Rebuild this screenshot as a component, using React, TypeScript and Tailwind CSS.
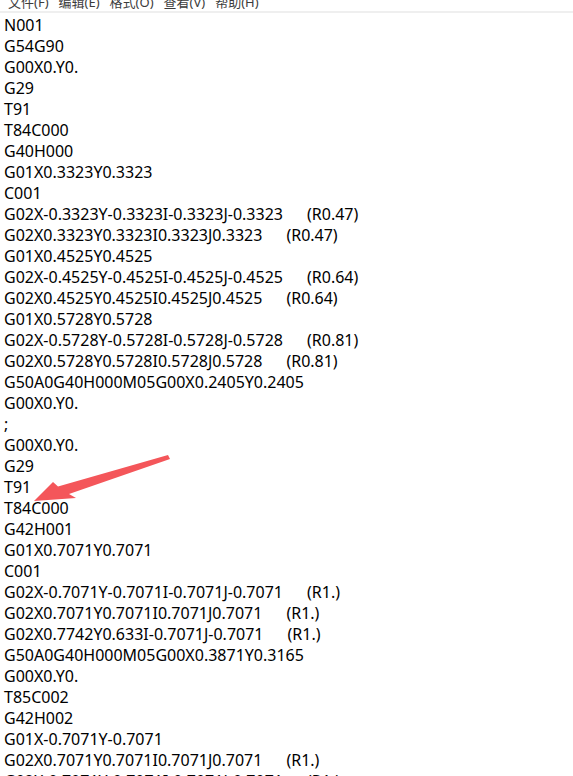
const lines: [string, string?][] = [
  ["N001"],
  ["G54G90"],
  ["G00X0.Y0."],
  ["G29"],
  ["T91"],
  ["T84C000"],
  ["G40H000"],
  ["G01X0.3323Y0.3323"],
  ["C001"],
  ["G02X-0.3323Y-0.3323I-0.3323J-0.3323", "(R0.47)"],
  ["G02X0.3323Y0.3323I0.3323J0.3323", "(R0.47)"],
  ["G01X0.4525Y0.4525"],
  ["G02X-0.4525Y-0.4525I-0.4525J-0.4525", "(R0.64)"],
  ["G02X0.4525Y0.4525I0.4525J0.4525", "(R0.64)"],
  ["G01X0.5728Y0.5728"],
  ["G02X-0.5728Y-0.5728I-0.5728J-0.5728", "(R0.81)"],
  ["G02X0.5728Y0.5728I0.5728J0.5728", "(R0.81)"],
  ["G50A0G40H000M05G00X0.2405Y0.2405"],
  ["G00X0.Y0."],
  [";"],
  ["G00X0.Y0."],
  ["G29"],
  ["T91"],
  ["T84C000"],
  ["G42H001"],
  ["G01X0.7071Y0.7071"],
  ["C001"],
  ["G02X-0.7071Y-0.7071I-0.7071J-0.7071", "(R1.)"],
  ["G02X0.7071Y0.7071I0.7071J0.7071", "(R1.)"],
  ["G02X0.7742Y0.633I-0.7071J-0.7071", "(R1.)"],
  ["G50A0G40H000M05G00X0.3871Y0.3165"],
  ["G00X0.Y0."],
  ["T85C002"],
  ["G42H002"],
  ["G01X-0.7071Y-0.7071"],
  ["G02X0.7071Y0.7071I0.7071J0.7071", "(R1.)"],
  ["G02X-0.7071Y-0.7071I-0.7071J-0.7071", "(R1.)"],
];

const menu = ["文件(F)", "编辑(E)", "格式(O)", "查看(V)", "帮助(H)"];

export default function App() {
  return (
    <div className="relative h-[776px] w-[573px] overflow-hidden bg-white font-['Noto_Sans','Noto_Sans_CJK_SC',sans-serif]">
      {/* menu bar, cut off at the top */}
      <div className="h-[11px] overflow-hidden">
        <div className="-mt-[8px] flex gap-[10px] pl-[8px] text-[13px] leading-[20px] text-[#3c3c3c]">
          {menu.map((m) => (
            <span key={m}>{m}</span>
          ))}
        </div>
      </div>
      <div className="h-[2px] bg-[#efefef]" />

      {/* editor text */}
      <div className="pl-[4px] pt-[2px] text-[16px] leading-[21px] text-black">
        {lines.map(([code, note], i) => (
          <div key={i} className="whitespace-pre">
            {code}
            {note && <span className="ml-[24px]">{note}</span>}
          </div>
        ))}
      </div>

      {/* red annotation arrow */}
      <svg className="absolute left-0 top-0" width="573" height="776">
        <polygon
          points="34,501 53,482 58,486.5 168,455 170,459 69,494 76,498"
          fill="#f4565a"
        />
      </svg>
    </div>
  );
}
